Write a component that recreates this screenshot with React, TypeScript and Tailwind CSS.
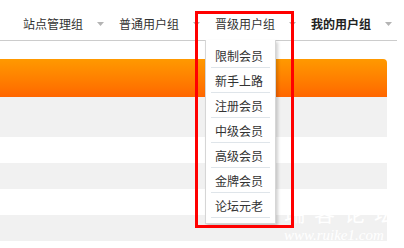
import React from "react";

const groups = [
  { name: "站点管理组", bold: false },
  { name: "普通用户组", bold: false },
  { name: "晋级用户组", bold: false, open: true },
  { name: "我的用户组", bold: true },
];

const levels = ["限制会员", "新手上路", "注册会员", "中级会员", "高级会员", "金牌会员", "论坛元老"];

const Caret = () => (
  <svg width="7" height="4" viewBox="0 0 7 4" className="block">
    <polygon points="0,0 7,0 3.5,4" fill="#b4b4b4" />
  </svg>
);

const App = () => {
  return (
    <div
      className="relative w-[404px] h-[248px] overflow-hidden bg-white text-[12px] text-[#333]"
      style={{ fontFamily: '"Noto Sans CJK SC", "Noto Sans", sans-serif' }}
    >
      {/* group tabs */}
      <div className="relative z-20 w-[397px] h-[41px] border-b border-[#cccccc] flex items-center pt-[8px] pl-[23px]">
        {groups.map((g) => (
          <div key={g.name} className="relative flex items-center shrink-0">
            <span className={(g.bold ? "font-bold text-[#222] " : "") + "leading-[14px] whitespace-nowrap"}>{g.name}</span>
            <span className="ml-[14px] mr-[15px]">
              <Caret />
            </span>
            {g.open && (
              <div className="absolute left-[-10px] top-[23px] w-[71px] bg-white border border-t-0 border-[#d6d6d6] shadow-[2px_2px_3px_rgba(0,0,0,0.18)] pt-[3px] pb-[5px]">
                {levels.map((l) => (
                  <div key={l} className="mx-[5px] h-[25px] border-b border-[#dfe5ea] flex items-center pl-[4px] pt-[2px] leading-none whitespace-nowrap">
                    {l}
                  </div>
                ))}
              </div>
            )}
          </div>
        ))}
      </div>

      {/* table */}
      <div className="mt-[18px] w-[387px]">
        <div className="h-[38px] rounded-tr-[4px] bg-gradient-to-b from-[#ff9900] to-[#ff6600]" />
        <div className="h-[40px] bg-[#f1f1f1]" />
        <div className="h-[26px] bg-white" />
        <div className="h-[26px] bg-[#f1f1f1]" />
        <div className="h-[26px] bg-white" />
        <div className="h-[26px] bg-[#f1f1f1]" />
        <div className="h-[26px] bg-white" />
      </div>

      {/* watermark */}
      <div className="absolute left-[284px] top-[202px] z-10 text-white whitespace-nowrap">
        <div className="text-[21px] leading-[21px] tracking-[9px]" style={{ fontFamily: '"Noto Sans CJK SC", serif' }}>
          瑞客论坛
        </div>
        <div className="mt-[6px] text-[15px] leading-[13px] italic" style={{ fontFamily: '"Liberation Serif", serif' }}>
          www.ruike1.com
        </div>
      </div>

      {/* highlight box */}
      <div className="absolute left-[195px] top-[11px] w-[99px] h-[217px] border-[3px] border-[#ff0000] z-30" />
    </div>
  );
};

export default App;
